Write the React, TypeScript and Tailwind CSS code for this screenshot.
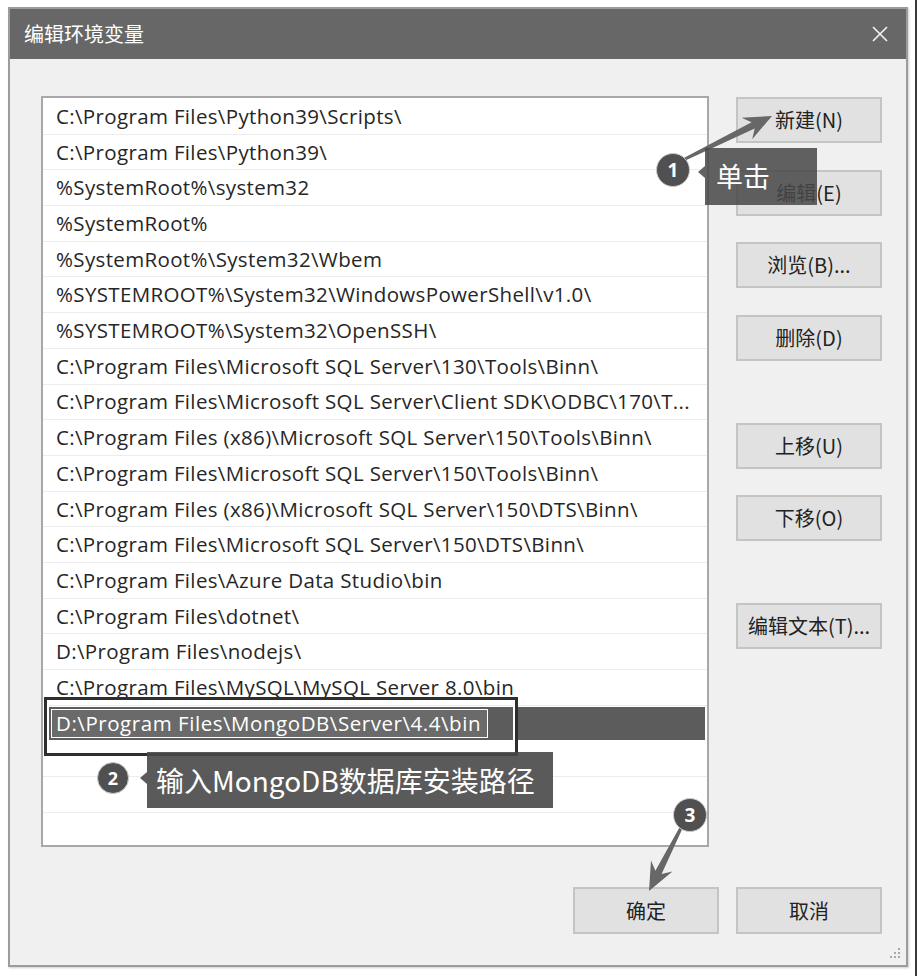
import React from "react";

const rows: string[] = [
  "C:\\Program Files\\Python39\\Scripts\\",
  "C:\\Program Files\\Python39\\",
  "%SystemRoot%\\system32",
  "%SystemRoot%",
  "%SystemRoot%\\System32\\Wbem",
  "%SYSTEMROOT%\\System32\\WindowsPowerShell\\v1.0\\",
  "%SYSTEMROOT%\\System32\\OpenSSH\\",
  "C:\\Program Files\\Microsoft SQL Server\\130\\Tools\\Binn\\",
  "C:\\Program Files\\Microsoft SQL Server\\Client SDK\\ODBC\\170\\T...",
  "C:\\Program Files (x86)\\Microsoft SQL Server\\150\\Tools\\Binn\\",
  "C:\\Program Files\\Microsoft SQL Server\\150\\Tools\\Binn\\",
  "C:\\Program Files (x86)\\Microsoft SQL Server\\150\\DTS\\Binn\\",
  "C:\\Program Files\\Microsoft SQL Server\\150\\DTS\\Binn\\",
  "C:\\Program Files\\Azure Data Studio\\bin",
  "C:\\Program Files\\dotnet\\",
  "D:\\Program Files\\nodejs\\",
  "C:\\Program Files\\MySQL\\MySQL Server 8.0\\bin",
];

function arrowPoints(x1: number, y1: number, x2: number, y2: number): string {
  const dx = x2 - x1;
  const dy = y2 - y1;
  const len = Math.hypot(dx, dy);
  const ux = dx / len;
  const uy = dy / len;
  const nx = -uy;
  const ny = ux;
  const tail = 1.5;
  const shaft = 3.5;
  const headW = 12;
  const headL = 28;
  const notch = 7;
  const p = (along: number, side: number) =>
    `${(x1 + ux * along + nx * side).toFixed(1)},${(y1 + uy * along + ny * side).toFixed(1)}`;
  return [
    p(0, tail),
    p(len - headL + notch, shaft),
    p(len - headL, headW),
    p(len, 0),
    p(len - headL, -headW),
    p(len - headL + notch, -shaft),
    p(0, -tail),
  ].join(" ");
}

function Btn({ label, className = "" }: { label: string; className?: string }) {
  return (
    <div
      className={`w-[146px] flex items-center justify-center bg-[#e1e1e1] border-2 border-[#c4c4c4] text-[20px] text-[#222] font-['Noto_Sans_CJK_SC',sans-serif] ${className}`}
    >
      {label}
    </div>
  );
}

export default function App() {
  const cjk = "font-['Noto_Sans_CJK_SC',sans-serif]";
  const empties = [0, 1, 2, 3];
  return (
    <div className="relative w-[917px] h-[976px] bg-white overflow-hidden border-r-2 border-[#3a3a3a]">
      <div className="pl-[8px] pt-[7px]">
        <div className="w-[900px] h-[960px] border-2 border-[#9c9c9c] bg-[#f0f0f0] flex flex-col shadow-[1px_1px_2px_rgba(0,0,0,0.2)]">
          {/* title bar */}
          <div className="h-[50px] shrink-0 bg-[#676767] flex items-center justify-between pl-[14px] pr-[18px]">
            <span className={`text-white text-[20px] ${cjk}`}>编辑环境变量</span>
            <svg width="16" height="16" viewBox="0 0 16 16">
              <path d="M1 1 L15 15 M15 1 L1 15" stroke="#f4f4f4" strokeWidth="1.6" fill="none" />
            </svg>
          </div>
          {/* body */}
          <div className="relative flex-1 pl-[31px] pt-[37px] pr-[24px]">
            <div className="flex">
              {/* list box */}
              <div className="w-[668px] h-[751px] shrink-0 border-2 border-[#a8a8a8] bg-white pt-[1px] overflow-hidden font-['Open_Sans','Noto_Sans_CJK_SC',sans-serif] text-[20.5px] tracking-[0.35px] text-[#262626]">
                {rows.map((r, i) => (
                  <div
                    key={i}
                    className="h-[35.7px] flex items-center pl-[13px] border-b border-[#ececec] whitespace-nowrap overflow-hidden"
                  >
                    {r}
                  </div>
                ))}
                <div className="h-[35.7px] px-[2px] py-[1px]">
                  <div className="h-full bg-[#5c5c5c] flex items-center pl-[6px]">
                    <div className="h-[29px] w-[437px] border border-white bg-[#6a6a6a] flex items-center pl-[4px] whitespace-nowrap text-white tracking-[0.55px]">
                      D:\Program Files\MongoDB\Server\4.4\bin
                    </div>
                  </div>
                </div>
                {empties.map((e) => (
                  <div key={e} className="h-[35.7px] border-b border-[#ececec]" />
                ))}
              </div>
              {/* right buttons */}
              <div className="ml-[27px] flex flex-col pt-[1px]">
                <Btn label="新建(N)" className="h-[46px]" />
                <Btn label="编辑(E)" className="h-[46px] mt-[27px]" />
                <Btn label="浏览(B)..." className="h-[46px] mt-[26px]" />
                <Btn label="删除(D)" className="h-[46px] mt-[27px]" />
                <Btn label="上移(U)" className="h-[46px] mt-[62px]" />
                <Btn label="下移(O)" className="h-[46px] mt-[26px]" />
                <Btn label="编辑文本(T)..." className="h-[46px] mt-[62px]" />
              </div>
            </div>
            {/* bottom buttons */}
            <div className="flex justify-end gap-[17px] mt-[40px]">
              <Btn label="确定" className="h-[47px]" />
              <Btn label="取消" className="h-[47px]" />
            </div>
            {/* resize grip */}
            <svg className="absolute right-[5px] bottom-[4px]" width="14" height="14" viewBox="0 0 14 14">
              {[
                [11, 1],
                [11, 5],
                [7, 5],
                [11, 9],
                [7, 9],
                [3, 9],
              ].map(([x, y], i) => (
                <rect key={i} x={x} y={y} width="2" height="2" fill="#a8a8a8" />
              ))}
            </svg>
          </div>
        </div>
      </div>

      {/* annotations overlay */}
      <svg className="absolute left-0 top-0 pointer-events-none" width="917" height="976">
        <polygon points={arrowPoints(683, 160, 772, 116)} fill="#676767" />
        <polygon points={arrowPoints(682, 826, 649, 891)} fill="#676767" />
      </svg>

      {/* step 1 */}
      <div className="absolute left-[705px] top-[148px] w-[112px] h-[57px] bg-[rgba(72,72,72,0.86)] flex items-center pl-[11px]">
        <span className={`text-white text-[27px] ${cjk}`}>单击</span>
      </div>
      <div className="absolute left-[698px] top-[166px] w-0 h-0 border-y-[6px] border-y-transparent border-r-[7px] border-r-[rgba(72,72,72,0.86)]" />
      <div className="absolute left-[656px] top-[153px] w-[34px] h-[34px] rounded-full bg-[#505050] border-[1.5px] border-[#c8c8c8] flex items-center justify-center">
        <span className="text-white text-[19px] font-bold font-['Open_Sans',sans-serif] leading-none">1</span>
      </div>

      {/* step 2 */}
      <div className="absolute left-[44px] top-[697px] w-[474px] h-[59px] border-[3px] border-[#2e2e2e]">
        <div className="w-full h-full border-2 border-white" />
      </div>
      <div className="absolute left-[147px] top-[752px] w-[406px] h-[56px] bg-[rgba(72,72,72,0.9)] flex items-center pl-[9px]">
        <span className={`text-white text-[28px] whitespace-nowrap ${cjk}`}>输入MongoDB数据库安装路径</span>
      </div>
      <div className="absolute left-[140px] top-[772px] w-0 h-0 border-y-[6px] border-y-transparent border-r-[7px] border-r-[rgba(72,72,72,0.9)]" />
      <div className="absolute left-[97px] top-[762px] w-[32px] h-[32px] rounded-full bg-[#505050] border-[1.5px] border-[#c8c8c8] flex items-center justify-center">
        <span className="text-white text-[18px] font-bold font-['Open_Sans',sans-serif] leading-none">2</span>
      </div>

      {/* step 3 */}
      <div className="absolute left-[673px] top-[798px] w-[34px] h-[34px] rounded-full bg-[#505050] border-[1.5px] border-[#c8c8c8] flex items-center justify-center">
        <span className="text-white text-[19px] font-bold font-['Open_Sans',sans-serif] leading-none">3</span>
      </div>
    </div>
  );
}
